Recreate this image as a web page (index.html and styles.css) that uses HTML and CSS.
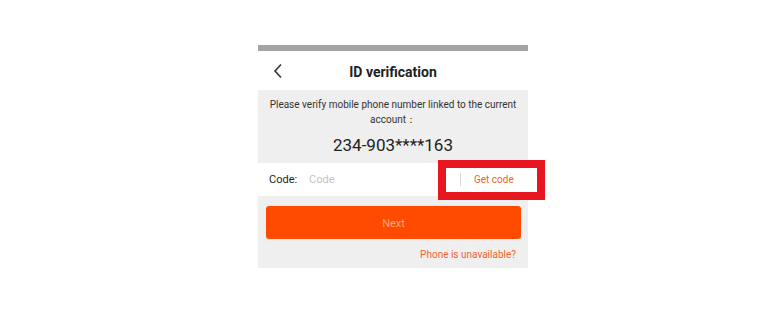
FILE: index.html
```html
<!DOCTYPE html>
<html>
<head>
<meta charset="utf-8">
<link rel="stylesheet" href="styles.css">
</head>
<body>
<div class="phone">
  <div class="statusbar"></div>
  <div class="header">
    <svg class="back" width="12" height="16" viewBox="0 0 12 16"><path d="M9 1.5 L3 8 L9 14.5" fill="none" stroke="#333" stroke-width="1.6"/></svg>
    <div class="title">ID verification</div>
  </div>
  <div class="info">
    <p class="msg">Please verify mobile phone number linked to the current account：</p>
    <p class="number">234-903****163</p>
  </div>
  <div class="coderow">
    <span class="label">Code:</span>
    <span class="placeholder">Code</span>
    <span class="sep"></span>
    <span class="getcode">Get code</span>
  </div>
  <div class="bottom">
    <div class="next">Next</div>
    <div class="unavail">Phone is unavailable?</div>
  </div>
  <div class="highlight"></div>
</div>
</body>
</html>
```

FILE: styles.css
```css
html, body { margin: 0; padding: 0; background: #fff; }
body { font-family: Roboto, "Liberation Sans", sans-serif; width: 765px; height: 325px; }
.phone { position: relative; margin-left: 258px; padding-top: 45px; width: 270px; }
.statusbar { height: 6px; background: #a3a3a3; }
.header { height: 39px; background: #fff; display: flex; align-items: center; position: relative; }
.back { position: absolute; left: 14px; top: 12px; }
.title { flex: 1; text-align: center; font-size: 14px; font-weight: 700; color: #222; padding-top: 2px; }
.info { background: #efefef; height: 73px; padding: 7px 10px 0; box-sizing: border-box; text-align: center; }
.msg { margin: 0; font-size: 10px; line-height: 15px; color: #333; }
.number { margin: 8px 0 0; font-size: 17px; color: #222; line-height: 20px; }
.coderow { height: 33px; background: #fff; display: flex; align-items: center; padding-left: 11px; font-size: 11px; }
.label { color: #222; width: 40px; }
.placeholder { color: #c4c4c4; flex: 1; }
.sep { width: 1px; height: 13px; background: #d8d8d8; margin-right: 13px; }
.getcode { color: #f4622c; font-size: 10px; width: 54px; }
.bottom { background: #efefef; height: 72px; padding: 10px 7px 0 8px; box-sizing: border-box; }
.next { height: 33px; background: #ff4b00; border-radius: 3px; color: #ffa47c; font-size: 11px; display: flex; align-items: center; justify-content: center; padding-top: 1px; box-sizing: border-box; }
.unavail { text-align: right; color: #f4622c; font-size: 10px; margin-top: 10px; padding-right: 5px; }
.highlight { position: absolute; left: 180px; top: 160px; width: 107px; height: 40px; box-sizing: border-box; border: 8px solid #e8161e; }
```
